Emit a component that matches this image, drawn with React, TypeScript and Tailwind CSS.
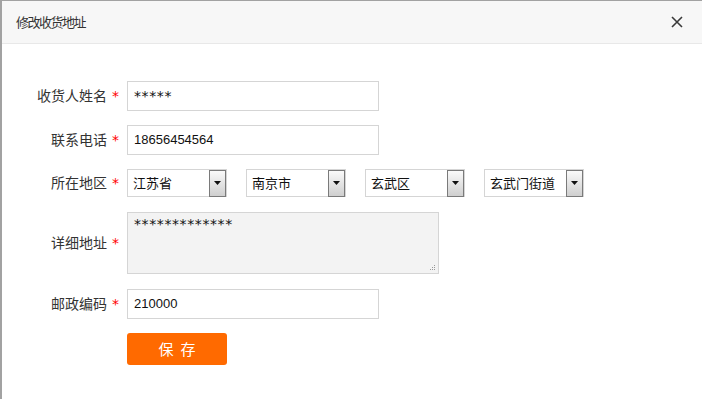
const font = "font-['Microsoft_YaHei','Noto_Sans_CJK_SC',sans-serif]";

function Label({ text }: { text: string }) {
  return (
    <div className="w-[117px] shrink-0 text-right text-[14px] text-[#333]">
      {text}
      <span className="ml-[5px] text-[#ff0000] font-['DejaVu_Sans',sans-serif] text-[14px]">*</span>
    </div>
  );
}

function TextBox({ value, stars }: { value: string; stars?: boolean }) {
  return (
    <div
      className={
        'ml-2 flex h-[30px] w-[252px] items-center border border-[#d5d5d5] bg-white pl-[6px] text-[#111] ' +
        (stars
          ? "font-['DejaVu_Sans',sans-serif] text-[14px] tracking-[0.6px]"
          : "font-['Liberation_Sans','Noto_Sans_CJK_SC',sans-serif] text-[13px]")
      }
    >
      {value}
    </div>
  );
}

function Select({ value, last }: { value: string; last?: boolean }) {
  return (
    <div
      className={
        'flex h-[28px] w-[100px] items-center border border-[#d5d5d5] bg-white ' +
        (last ? '' : 'mr-[19px]')
      }
    >
      <span className="flex-1 pl-[5px] text-[13px] text-[#111]">{value}</span>
      <div className="flex h-[27px] w-[17px] items-center justify-center border border-[#7a7a7a] bg-gradient-to-b from-[#fafafa] to-[#cfcfcf]">
        <svg width="7" height="4" viewBox="0 0 7 4">
          <path d="M0 0h7L3.5 4z" fill="#111" />
        </svg>
      </div>
    </div>
  );
}

export default function App() {
  return (
    <div className={`h-[399px] w-[702px] overflow-hidden bg-white border-t border-l-2 border-[#a2a2a2] ${font}`}>
      {/* Header */}
      <div className="flex h-[43px] items-center justify-between border-b border-[#e8e8e8] bg-[#f7f7f7] pl-[14px] pr-[18px]">
        <span className="text-[13px] tracking-[-1.5px] text-[#333]">修改收货地址</span>
        <svg width="12" height="12" viewBox="0 0 12 12" className="mr-[1px]">
          <path d="M1 1l10 10M11 1L1 11" stroke="#3a3a3a" strokeWidth="1.6" />
        </svg>
      </div>

      {/* Form */}
      <div className="pt-[37px]">
        <div className="mb-[14px] flex items-center">
          <Label text="收货人姓名" />
          <TextBox value="*****" stars />
        </div>
        <div className="mb-[14px] flex items-center">
          <Label text="联系电话" />
          <TextBox value="18656454564" />
        </div>
        <div className="mb-[15px] flex items-center">
          <Label text="所在地区" />
          <div className="ml-2 flex items-center">
            <Select value="江苏省" />
            <Select value="南京市" />
            <Select value="玄武区" />
            <Select value="玄武门街道" last />
          </div>
        </div>
        <div className="mb-[15px] flex items-center">
          <Label text="详细地址" />
          <div className="relative ml-2 h-[62px] w-[312px] border border-[#d5d5d5] bg-[#f3f3f3] pl-[6px] pt-[1px] text-[14px] tracking-[0.6px] text-[#111] font-['DejaVu_Sans',sans-serif]">
            *************
            <svg width="7" height="7" viewBox="0 0 7 7" className="absolute bottom-[2px] right-[2px]">
              <rect x="5" y="1" width="1" height="1" fill="#999" />
              <rect x="3" y="3" width="1" height="1" fill="#999" />
              <rect x="5" y="3" width="1" height="1" fill="#999" />
              <rect x="1" y="5" width="1" height="1" fill="#999" />
              <rect x="3" y="5" width="1" height="1" fill="#999" />
              <rect x="5" y="5" width="1" height="1" fill="#999" />
            </svg>
          </div>
        </div>
        <div className="mb-[14px] flex items-center">
          <Label text="邮政编码" />
          <TextBox value="210000" />
        </div>
        <div className="flex">
          <div className="w-[117px] shrink-0" />
          <button className="ml-2 flex h-[32px] w-[100px] items-center justify-center gap-[7px] rounded-[3px] bg-[#ff6a00] text-[15px] text-white">
            <span>保</span>
            <span>存</span>
          </button>
        </div>
      </div>
    </div>
  );
}
